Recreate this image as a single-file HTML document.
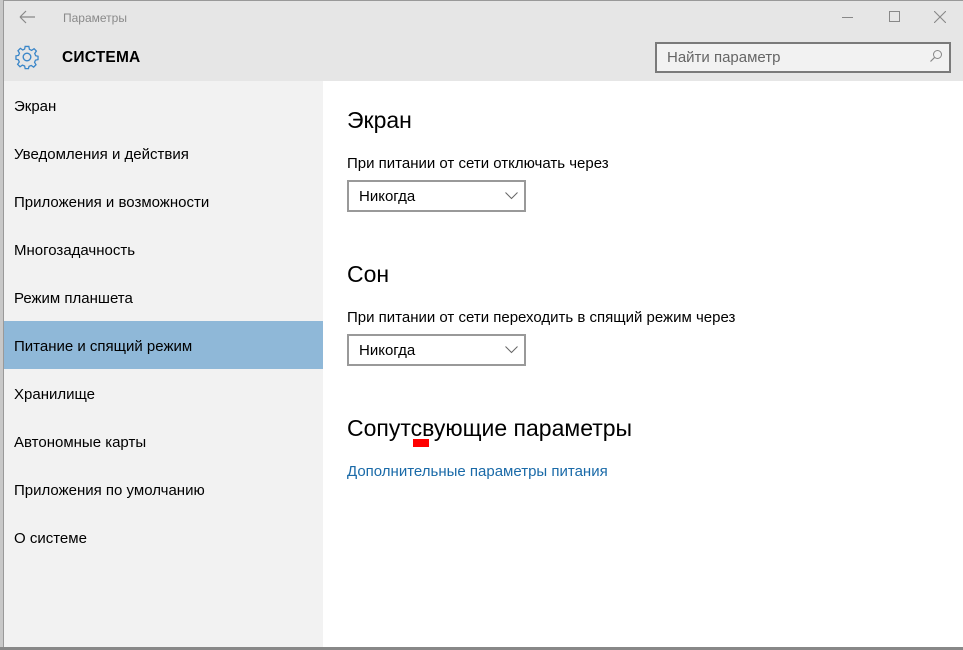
<!DOCTYPE html>
<html><head><meta charset="utf-8"><style>
*{margin:0;padding:0;box-sizing:border-box}
body{width:963px;height:650px;overflow:hidden;background:#fff;font-family:"Liberation Sans","DejaVu Sans",sans-serif;position:relative}
.abs{position:absolute}
.nav{position:absolute;left:14px;font-size:15px;color:#000}
.txt{position:absolute;color:#000}
.h{font-size:23px}
.p{font-size:15px}
</style></head><body>
<div class="abs" style="left:0;top:0;width:3px;height:650px;background:#c8c8c8"></div>
<div class="abs" style="left:3px;top:0;width:960px;height:1px;background:#999"></div>
<div class="abs" style="left:3px;top:1px;width:960px;height:80px;background:#e6e6e6"></div>
<div class="abs" style="left:3px;top:81px;width:320px;height:566px;background:#f2f2f2"></div>
<div class="abs" style="left:3px;top:321px;width:320px;height:48px;background:#8fb8d8"></div>
<div class="abs" style="left:0;top:647px;width:963px;height:3px;background:#888"></div>
<div class="abs" style="left:3px;top:0;width:1px;height:647px;background:#999"></div>

<svg class="abs" style="left:19px;top:10px" width="18" height="14" viewBox="0 0 18 14"><path d="M1 7H16M1 7L7 1M1 7L7 13" stroke="#888" stroke-width="1.2" fill="none"/></svg>
<div class="txt" style="left:63px;top:11px;font-size:12px;color:#8a8a8a">Параметры</div>
<div class="abs" style="left:842px;top:17px;width:11px;height:1px;background:#888"></div>
<div class="abs" style="left:889px;top:11px;width:11px;height:11px;border:1px solid #888"></div>
<svg class="abs" style="left:934px;top:11px" width="12" height="12"><path d="M0 0L12 12M12 0L0 12" stroke="#888" stroke-width="1.1"/></svg>

<svg class="abs" style="left:14px;top:44px" width="26" height="26" viewBox="-13 -13 26 26">
<path fill="none" stroke="#3a86c8" stroke-width="1.4" d="M-2,-11.5 L2,-11.5 L2.6,-8.3 L5,-7.2 L7.7,-9 L10.2,-6.5 L8.4,-3.8 L9.4,-1.4 L12,-0.8 L12,2.8 L9.2,3.4 L8.2,5.8 L9.8,8.4 L7.2,11 L4.6,9.2 L2.2,10.2 L1.6,12.6 L-2,12.6 L-2.6,9.8 L-5,8.8 L-7.6,10.6 L-10.2,8 L-8.4,5.4 L-9.4,3 L-12,2.4 L-12,-1.2 L-9.2,-1.8 L-8.2,-4.2 L-9.8,-6.8 L-7.2,-9.4 L-4.6,-7.6 L-2.6,-8.6 Z" transform="scale(0.92)"/>
<circle r="3.8" fill="none" stroke="#3a86c8" stroke-width="1.4"/></svg>
<div class="txt" style="left:62px;top:49px;font-size:15.5px;font-weight:bold;letter-spacing:0.2px">СИСТЕМА</div>

<div class="abs" style="left:655px;top:42px;width:296px;height:31px;border:2px solid #7a7a7a;background:#f2f2f2"></div>
<div class="txt" style="left:667px;top:49px;font-size:15px;color:#666">Найти параметр</div>
<svg class="abs" style="left:929px;top:49px" width="14" height="14"><circle cx="8.5" cy="5.5" r="4" fill="none" stroke="#888" stroke-width="1"/><path d="M5.6 8.4L1.5 12.5" stroke="#888" stroke-width="1.2"/></svg>

<div class="nav" style="top:98px">Экран</div>
<div class="nav" style="top:146px">Уведомления и действия</div>
<div class="nav" style="top:194px">Приложения и возможности</div>
<div class="nav" style="top:242px">Многозадачность</div>
<div class="nav" style="top:290px">Режим планшета</div>
<div class="nav" style="top:338px">Питание и спящий режим</div>
<div class="nav" style="top:386px">Хранилище</div>
<div class="nav" style="top:434px">Автономные карты</div>
<div class="nav" style="top:482px">Приложения по умолчанию</div>
<div class="nav" style="top:530px">О системе</div>

<div class="txt h" style="left:347px;top:107px">Экран</div>
<div class="txt p" style="left:347px;top:155px">При питании от сети отключать через</div>
<div class="abs" style="left:347px;top:180px;width:179px;height:32px;border:2px solid #999"></div>
<div class="txt p" style="left:359px;top:188px">Никогда</div>
<svg class="abs" style="left:505px;top:192px" width="13" height="8"><path d="M0.5 0.5L6.5 6.5L12.5 0.5" stroke="#666" fill="none"/></svg>

<div class="txt h" style="left:347px;top:261px">Сон</div>
<div class="txt p" style="left:347px;top:309px">При питании от сети переходить в спящий режим через</div>
<div class="abs" style="left:347px;top:334px;width:179px;height:32px;border:2px solid #999"></div>
<div class="txt p" style="left:359px;top:342px">Никогда</div>
<svg class="abs" style="left:505px;top:346px" width="13" height="8"><path d="M0.5 0.5L6.5 6.5L12.5 0.5" stroke="#666" fill="none"/></svg>

<div class="txt h" style="left:347px;top:415px">Сопутсвующие параметры</div>
<div class="abs" style="left:413px;top:439px;width:16px;height:8px;background:#f00"></div>
<div class="txt p" style="left:347px;top:463px;color:#1a6aa8">Дополнительные параметры питания</div>
</body></html>
